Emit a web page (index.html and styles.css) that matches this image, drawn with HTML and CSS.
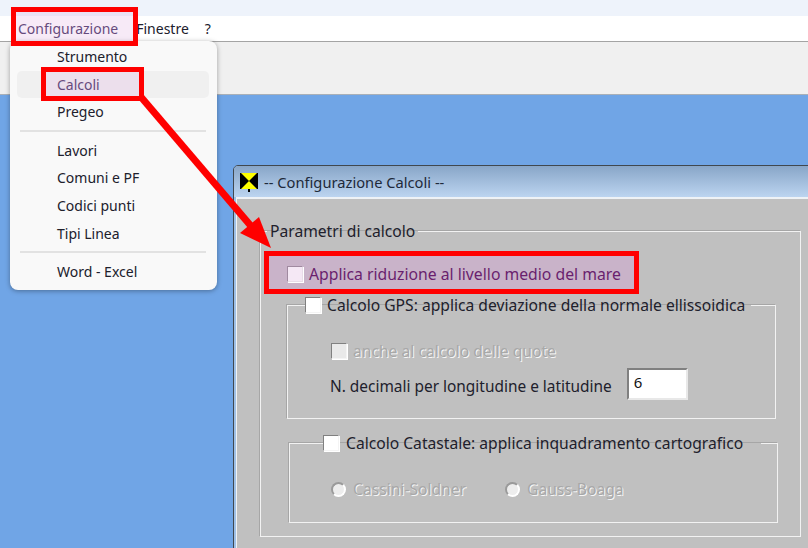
FILE: index.html
```html
<!DOCTYPE html>
<html lang="it">
<head>
<meta charset="utf-8">
<title>Configurazione Calcoli</title>
<link rel="stylesheet" href="styles.css">
</head>
<body>
<div class="topstrip"></div>
<nav class="menubar">
  <span class="menutitle active">Configurazione</span>
  <span class="menutitle">Finestre</span>
  <span class="menutitle">?</span>
</nav>
<div class="toolbar"></div>
<main class="desktop">
  <section class="window">
    <header class="titlebar">
      <svg class="appicon" width="18" height="19" viewBox="0 0 18 19">
        <rect width="18" height="16" fill="#000"/>
        <polygon points="1,0 17,0 9,8" fill="#ffff00"/>
        <polygon points="1,16 17,16 9,8" fill="#ffff00"/>
        <rect x="8" y="16" width="2" height="3" fill="#000"/>
      </svg>
      <span>-- Configurazione Calcoli --</span>
    </header>
    <div class="client">
      <fieldset class="group outer">
        <legend class="legend-text">Parametri di calcolo</legend>
        <div class="highlight">
          <span class="check tinted"></span>
          <span>Applica riduzione al livello medio del mare</span>
        </div>
        <fieldset class="group gps">
          <legend class="legend-check"><span class="check"></span><span>Calcolo GPS: applica deviazione della normale ellissoidica</span></legend>
          <div class="row disabled"><span class="check off"></span><span>anche al calcolo delle quote</span></div>
          <div class="row decimals"><span class="decimals-label">N. decimali per longitudine e latitudine</span><span class="input">6</span></div>
        </fieldset>
        <fieldset class="group cat">
          <legend class="legend-check"><span class="check"></span><span>Calcolo Catastale: applica inquadramento cartografico</span></legend>
          <div class="row disabled radios">
            <span class="radio-item one"><span class="radio"></span><span>Cassini-Soldner</span></span>
            <span class="radio-item"><span class="radio"></span><span>Gauss-Boaga</span></span>
          </div>
        </fieldset>
      </fieldset>
    </div>
  </section>
</main>

<ul class="menu">
  <li class="item">Strumento</li>
  <li class="item hover">Calcoli</li>
  <li class="item">Pregeo</li>
  <li class="sep"></li>
  <li class="item">Lavori</li>
  <li class="item">Comuni e PF</li>
  <li class="item">Codici punti</li>
  <li class="item">Tipi Linea</li>
  <li class="sep"></li>
  <li class="item">Word - Excel</li>
</ul>

<div class="redbox box-config"></div>
<div class="redbox box-calcoli"></div>
<svg class="arrow" width="808" height="548" viewBox="0 0 808 548">
  <line x1="141" y1="97" x2="256" y2="232" stroke="#ff0000" stroke-width="7"/>
  <polygon points="271,248 240,233 259,217" fill="#ff0000"/>
</svg>
</body>
</html>
```
FILE: styles.css
```css
* { box-sizing: border-box; }
html, body { margin: 0; height: 100%; }
body {
  width: 808px;
  height: 548px;
  overflow: hidden;
  position: relative;
  display: flex;
  flex-direction: column;
  font-family: "Noto Sans", "Open Sans", sans-serif;
  font-size: 14px;
  color: #20202c;
}
.topstrip { height: 16px; background: #eef3fb; flex: none; }
.menubar {
  height: 26px;
  flex: none;
  background: #fff;
  border-bottom: 1px solid #a4a4a4;
  display: flex;
  align-items: center;
  padding-left: 18px;
  padding-bottom: 1px;
}
.menutitle { margin-right: 16px; }
.menutitle.active { margin-right: 18px; color: #3c2a5c; }
.toolbar { height: 53px; flex: none; background: #f0f0f0; border-bottom: 1px solid #a9b0b8; }
.desktop { flex: 1; position: relative; background: #70a5e6; overflow: hidden; }

/* Window on the desktop */
.window {
  position: absolute;
  left: 233px;
  top: 70px;
  width: 640px;
  height: 460px;
  background: #9fc0e6;
  border: 1px solid #40484f;
  border-radius: 5px 5px 0 0;
  padding: 0 0 0 2px;
  display: flex;
  flex-direction: column;
}
.titlebar {
  height: 31px;
  flex: none;
  margin-left: -2px;
  padding: 1px 0 0 6px;
  display: flex;
  align-items: center;
  gap: 6px;
  border-radius: 4px 4px 0 0;
  background: linear-gradient(#88a6c8, #bcd4f0);
  font-size: 14.7px;
  color: #1e2a3a;
}
.appicon { flex: none; }
.client {
  flex: 1;
  background: #c0c0c0;
  border-top: 2px solid #eef2f6;
  border-left: 1px solid #eef2f6;
  padding: 23px 0 0 23px;
  font-size: 15.65px;
}

/* Groups */
.group {
  margin: 0;
  padding: 0;
  min-width: 0;
  border: 1px solid #f2f2f2;
  box-shadow: -1px -1px 0 #a6a6a6;
}
.outer { width: 541px; height: 315px; padding: 0; }
.legend-text { padding: 0 3px; margin-left: 6px; line-height: 18px; }
.legend-check {
  padding: 0 6px 0 0;
  display: flex;
  align-items: center;
  gap: 6px;
  line-height: 18px;
}
.highlight {
  width: 375px;
  height: 43px;
  margin: 11px 0 0 3px;
  padding: 2px 0 0 18px;
  border: 5px solid #ff0000;
  background: #c9b3c9;
  color: #6a1f6e;
  font-size: 15.75px;
  display: flex;
  align-items: center;
  gap: 6px;
}
.gps { margin: 2px 0 0 26px; width: 489px; height: 123px; }
.gps .legend-check { margin-left: 17px; }
.cat { margin: 15px 0 0 28px; width: 489px; height: 89px; }
.cat .legend-check { margin-left: 33px; padding-right: 18px; gap: 7px; }

.row { display: flex; align-items: center; margin-left: 42px; line-height: 20px; }
.disabled { color: #a8a8a8; text-shadow: 1px 1px 0 #f6f6f6; }
.gps .disabled { margin-top: 27px; gap: 6px; }
.decimals { margin-top: 7px; gap: 15px; }
.decimals-label { margin-top: 6px; font-size: 15.43px; }
.radios { margin-top: 27px; margin-left: 41px; }
.radio-item { display: flex; align-items: center; gap: 7px; }
.radio-item.one { width: 174px; }

/* Controls */
.check {
  width: 16px;
  height: 16px;
  flex: none;
  background: #fff;
  border: 1px solid;
  border-color: #808080 #f4f4f4 #f4f4f4 #808080;
  box-shadow: 1px 1px 0 #fff;
}
.check.off { background: #e9e9e9; margin-left: 1px; }
.check.tinted { background: #f5e8f5; border-color: #a08aa0 #e8dce8 #e8dce8 #a08aa0; }
.radio {
  width: 15px;
  height: 15px;
  flex: none;
  border-radius: 50%;
  background: #ededed;
  border: 2px solid #9a9a9a;
  border-right-color: #fff;
  border-bottom-color: #fff;
}
.input {
  width: 61px;
  height: 32px;
  background: #fff;
  border: 2px solid;
  border-color: #808080 #e8e8e8 #e8e8e8 #808080;
  padding: 1px 0 0 5px;
  line-height: 22px;
  font-size: 15px;
  color: #111;
}

/* Drop-down menu */
.menu {
  position: absolute;
  left: 10px;
  top: 41px;
  width: 207px;
  height: 249px;
  margin: 0;
  padding: 2px 8px 2px 7px;
  list-style: none;
  background: #f9f9f9;
  border-radius: 8px;
  box-shadow: 0 1px 5px rgba(0, 0, 0, .35);
}
.item {
  height: 27.6px;
  line-height: 27px;
  padding-left: 40px;
  border-radius: 5px;
}
.item.hover { background: #f0f0f0; color: #3c2a5c; }
.sep { height: 2px; margin: 4px 3px 5px 3px; background: #e2e2e2; }

/* Annotations */
.redbox { position: absolute; border: 5px solid #ff0000; }
.box-config { left: 11px; top: 7px; width: 127px; height: 39px; background: rgba(224, 170, 224, .25); }
.box-calcoli { left: 41px; top: 67px; width: 103px; height: 34px; background: rgba(224, 170, 224, .25); }
.arrow { position: absolute; left: 0; top: 0; pointer-events: none; }
```
